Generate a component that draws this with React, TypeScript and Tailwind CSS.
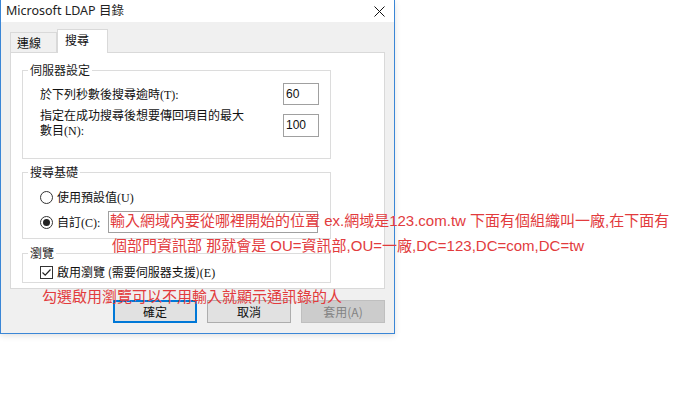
import React from 'react';

// 字型 class（完整寫出，Tailwind 才掃得到）
const ui = "font-['Noto_Sans','Noto_Sans_CJK_TC',sans-serif]";
const cjk = "font-['Noto_Sans_CJK_TC','Noto_Sans',sans-serif]";
const serif = "font-['Liberation_Serif',serif]";
const note = "font-['Liberation_Sans','Noto_Sans_CJK_TC',sans-serif]";

const Group: React.FC<{ title: string; className: string; children: React.ReactNode }> = ({
  title,
  className,
  children,
}) => (
  <fieldset className={`w-[309px] border border-[#dcdcdc] ${className}`}>
    <legend className={`${cjk} ml-[5px] px-[2px] text-[12px] leading-[14px] text-[#1a1a1a]`}>{title}</legend>
    <div className="pl-[17px] pr-[11px]">{children}</div>
  </fieldset>
);

export default function App() {
  return (
    <div className="relative w-[675px] h-[394px] bg-white overflow-hidden text-[#111]">
      {/* 對話框 */}
      <div className="w-[395px] h-[334px] flex flex-col border-x border-b border-[#3a86d6] shadow-[0_2px_6px_rgba(0,0,0,0.12)]">
        {/* 標題列 */}
        <div className="h-[22px] bg-white flex items-center justify-between pl-[5px] pr-[9px]">
          <span className={`${ui} text-[12.5px] leading-[16px] text-[#222]`}>Microsoft LDAP 目錄</span>
          <svg width="11" height="11" viewBox="0 0 11 11">
            <path d="M0.5 0.5 L10.5 10.5 M10.5 0.5 L0.5 10.5" stroke="#111" strokeWidth="1" />
          </svg>
        </div>

        <div className="flex-1 bg-[#f0f0f0] px-[9px] flex flex-col">
          {/* 分頁 */}
          <div className="h-[30px] flex items-end">
            <div className={`${cjk} w-[47px] h-[20px] border border-b-0 border-[#d9d9d9] bg-[#f0f0f0] pl-[6px] text-[12px] leading-[19px]`}>
              連線
            </div>
            <div className={`${cjk} relative z-10 -mb-px w-[51px] h-[24px] border border-b-0 border-[#d9d9d9] bg-white pl-[7px] text-[12px] leading-[20px]`}>
              搜尋
            </div>
          </div>

          {/* 分頁內容 */}
          <div className="h-[237px] bg-white border border-[#d9d9d9] pl-[11px] pt-[10px]">
            <Group title="伺服器設定" className="h-[96px]">
              <div className="mt-[6px] h-[22px] flex items-center justify-between">
                <span className={`${cjk} text-[12px] leading-[15px]`}>
                  於下列秒數後搜尋逾時<span className={serif}>(T):</span>
                </span>
                <div className={`${note} w-[36px] h-[22px] border border-[#a0a0a0] bg-white pl-[2px] text-[12px] leading-[20px]`}>60</div>
              </div>
              <div className="mt-[2px] flex items-start justify-between">
                <div className={`${cjk} flex flex-col text-[12px] leading-[15px]`}>
                  <span>指定在成功搜尋後想要傳回項目的最大</span>
                  <span>
                    數目<span className={serif}>(N):</span>
                  </span>
                </div>
                <div className={`${note} mt-[7px] w-[36px] h-[23px] border border-[#a0a0a0] bg-white pl-[2px] text-[12px] leading-[21px]`}>
                  100
                </div>
              </div>
            </Group>

            <Group title="搜尋基礎" className="h-[74px] mt-[6px]">
              <div className="mt-[10px] h-[16px] flex items-center">
                <span className="w-[13px] h-[13px] rounded-full border border-[#333] bg-white" />
                <span className={`${cjk} ml-[4px] text-[12px] leading-[15px]`}>
                  使用預設值<span className={serif}>(U)</span>
                </span>
              </div>
              <div className="mt-[6px] h-[22px] flex items-center">
                <span className="w-[13px] h-[13px] rounded-full border border-[#333] bg-white flex items-center justify-center">
                  <span className="w-[7px] h-[7px] rounded-full bg-[#222]" />
                </span>
                <span className={`${cjk} ml-[4px] w-[51px] text-[12px] leading-[15px]`}>
                  自訂<span className={serif}>(C):</span>
                </span>
                <div className="w-[210px] h-[22px] border border-[#a0a0a0] bg-white" />
              </div>
            </Group>

            <Group title="瀏覽" className="h-[37px] mt-[7px]">
              <div className="mt-[5px] h-[14px] flex items-center">
                <svg width="13" height="13" viewBox="0 0 13 13">
                  <rect x="0.5" y="0.5" width="12" height="12" fill="#fff" stroke="#333" />
                  <path d="M2.5 6.5 L5.2 9.2 L10.5 3.5" fill="none" stroke="#222" strokeWidth="1.2" />
                </svg>
                <span className={`${cjk} ml-[4px] text-[12px] leading-[15px]`}>
                  啟用瀏覽 (需要伺服器支援)<span className={serif}>(E)</span>
                </span>
              </div>
            </Group>
          </div>

          {/* 按鈕 */}
          <div className="mt-[11px] ml-[103px] flex gap-[10px]">
            <button className={`${cjk} w-[85px] h-[23px] border-2 border-[#0078d7] bg-[#e1e1e1] text-[12px] leading-[18px] text-[#111]`}>
              確定
            </button>
            <button className={`${cjk} w-[85px] h-[23px] border border-[#adadad] bg-[#e1e1e1] text-[12px] leading-[20px] text-[#111]`}>
              取消
            </button>
            <button className={`${cjk} w-[85px] h-[23px] border border-[#bfbfbf] bg-[#cccccc] text-[12px] leading-[20px] text-[#838383]`}>
              套用(A)
            </button>
          </div>
        </div>
      </div>

      {/* 紅字註解 */}
      <div className={`${note} absolute left-[110px] top-[208px] text-[15px] leading-[25px] text-[#e23b3d] whitespace-nowrap`}>
        <div>輸入網域內要從哪裡開始的位置 ex.網域是123.com.tw 下面有個組織叫一廠,在下面有</div>
        <div className="ml-[2px]">個部門資訊部 那就會是 OU=資訊部,OU=一廠,DC=123,DC=com,DC=tw</div>
      </div>
      <div className={`${note} absolute left-[42px] top-[284px] text-[15px] leading-[25px] text-[#e23b3d] whitespace-nowrap`}>
        勾選啟用瀏覽可以不用輸入就顯示通訊錄的人
      </div>
    </div>
  );
}
